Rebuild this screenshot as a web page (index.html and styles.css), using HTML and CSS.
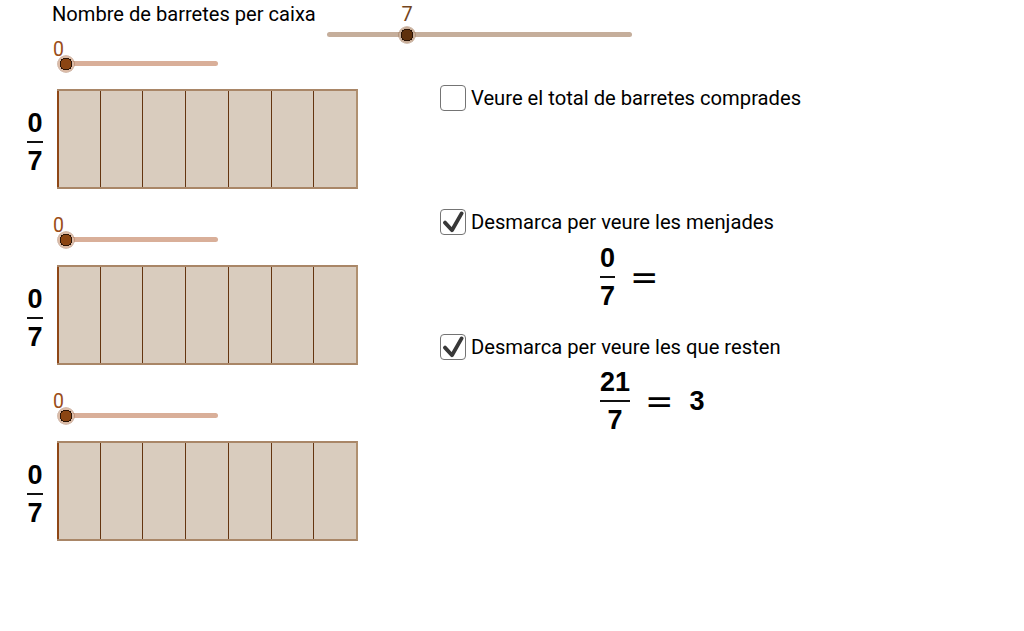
FILE: index.html
```html
<!DOCTYPE html>
<html lang="ca">
<head>
<meta charset="utf-8">
<title>Barretes</title>
<link rel="stylesheet" href="styles.css">
</head>
<body>
<div class="page">
  <header class="top">
    <div class="title">Nombre de barretes per caixa</div>
    <div class="slider big">
      <span class="track"></span>
      <span class="knob"></span>
      <span class="val">7</span>
    </div>
  </header>
  <main class="main">
    <section class="left">
      <div class="group">
        <div class="slider small">
          <span class="track"></span>
          <span class="knob"></span>
          <span class="val">0</span>
        </div>
        <div class="bar-row">
          <div class="frac side"><span class="num">0</span><span class="line"></span><span class="den">7</span></div>
          <div class="box"><span class="cell"></span><span class="cell"></span><span class="cell"></span><span class="cell"></span><span class="cell"></span><span class="cell"></span><span class="cell"></span></div>
        </div>
      </div>
      <div class="group">
        <div class="slider small">
          <span class="track"></span>
          <span class="knob"></span>
          <span class="val">0</span>
        </div>
        <div class="bar-row">
          <div class="frac side"><span class="num">0</span><span class="line"></span><span class="den">7</span></div>
          <div class="box"><span class="cell"></span><span class="cell"></span><span class="cell"></span><span class="cell"></span><span class="cell"></span><span class="cell"></span><span class="cell"></span></div>
        </div>
      </div>
      <div class="group">
        <div class="slider small">
          <span class="track"></span>
          <span class="knob"></span>
          <span class="val">0</span>
        </div>
        <div class="bar-row">
          <div class="frac side"><span class="num">0</span><span class="line"></span><span class="den">7</span></div>
          <div class="box"><span class="cell"></span><span class="cell"></span><span class="cell"></span><span class="cell"></span><span class="cell"></span><span class="cell"></span><span class="cell"></span></div>
        </div>
      </div>
    </section>
    <section class="right">
      <div class="check-row row1">
        <span class="cb"></span>
        <span class="lbl">Veure el total de barretes comprades</span>
      </div>
      <div class="check-row row2">
        <span class="cb"><svg viewBox="0 0 23 23" width="23" height="23"><path d="M4 12.6 L11 20.2 L20.6 3.4" fill="none" stroke="#383838" stroke-width="3.8" stroke-linecap="round" stroke-linejoin="round"/></svg></span>
        <span class="lbl">Desmarca per veure les menjades</span>
      </div>
      <div class="math-row m1">
        <div class="frac"><span class="num">0</span><span class="line"></span><span class="den">7</span></div>
        <span class="eq">=</span>
      </div>
      <div class="check-row row3">
        <span class="cb"><svg viewBox="0 0 23 23" width="23" height="23"><path d="M4 12.6 L11 20.2 L20.6 3.4" fill="none" stroke="#383838" stroke-width="3.8" stroke-linecap="round" stroke-linejoin="round"/></svg></span>
        <span class="lbl">Desmarca per veure les que resten</span>
      </div>
      <div class="math-row m2">
        <div class="frac"><span class="num">21</span><span class="line"></span><span class="den">7</span></div>
        <span class="eq">=</span>
        <span class="res">3</span>
      </div>
    </section>
  </main>
</div>
</body>
</html>
```
FILE: styles.css
```css
html, body {
  margin: 0;
  padding: 0;
  background: #ffffff;
}

body {
  font-family: Roboto, "Liberation Sans", sans-serif;
  font-size: 20px;
  color: #000;
}

.page {
  width: 1024px;
  height: 631px;
  overflow: hidden;
}

/* header */
.top {
  display: flex;
  height: 43px;
}

.title {
  width: 275px;
  margin-left: 52px;
  padding-top: 2px;
  line-height: 24px;
  font-size: 20.1px;
}

/* sliders */
.slider {
  position: relative;
  box-sizing: border-box;
}

.slider .track {
  display: block;
  height: 5px;
  border-radius: 3px;
}

.slider .knob {
  position: absolute;
  width: 18px;
  height: 18px;
  border-radius: 50%;
}

.slider .val {
  position: absolute;
}

.big {
  width: 305px;
  padding-top: 32px;
}

.big .track {
  width: 305px;
  background: #c5ae9b;
}

.big .knob {
  left: 71px;
  top: 25.5px;
  background: radial-gradient(circle, #5f300c 0 5.2px, #2a1406 5.2px 6.4px, #c8ad98 6.4px 7.8px, rgba(160, 120, 90, 0.5) 7.8px 9px, transparent 9px);
}

.big .val {
  left: 80px;
  top: 4px;
  transform: translateX(-50%);
  font-size: 20px;
  line-height: 20px;
  color: #74461c;
}

.small {
  height: 46px;
  padding-top: 18px;
}

.small .track {
  margin-left: 62px;
  width: 156px;
  background: #d9af99;
}

.small .knob {
  left: 56.5px;
  top: 12px;
  background: radial-gradient(circle, #8b4513 0 5.2px, #2c1507 5.2px 6.4px, #dcbba6 6.4px 7.8px, rgba(170, 120, 90, 0.5) 7.8px 9px, transparent 9px);
}

.small .val {
  left: 53px;
  top: -3.5px;
  font-size: 19.5px;
  line-height: 19px;
  color: #9a4d18;
}

/* main layout */
.main {
  display: flex;
}

.left {
  width: 440px;
  flex: none;
}

.group {
  margin-bottom: 30px;
}

.bar-row {
  display: flex;
  align-items: center;
}

/* fractions */
.frac {
  display: inline-flex;
  flex-direction: column;
  align-items: center;
  padding: 0 1px;
  font-family: "Liberation Sans", Arial, sans-serif;
  font-weight: bold;
  font-size: 27px;
  line-height: 24px;
}

.frac .num,
.frac .den {
  display: block;
}

.frac .line {
  align-self: stretch;
  height: 2px;
  margin: 6px 0;
  background: #111;
}

.frac.side {
  margin-left: 26px;
  margin-right: 13px;
  margin-top: 6px;
  width: 16px;
}

/* bar boxes */
.box {
  box-sizing: border-box;
  width: 301px;
  height: 100px;
  display: grid;
  grid-template-columns: repeat(7, 1fr);
  background: #d9ccbe;
  border-top: 2px solid #a98667;
  border-bottom: 2px solid #a98667;
  border-right: 2px solid #b09070;
}

.box .cell {
  border-left: 1.5px solid #643410;
}

.box .cell:first-child {
  border-left: 2px solid #8f4716;
}

/* right column */
.right {
  display: flex;
  flex-direction: column;
  padding-top: 42px;
}

.check-row {
  display: flex;
  align-items: center;
  gap: 5px;
  height: 26px;
  line-height: 24px;
  font-size: 20.2px;
}

.cb {
  box-sizing: border-box;
  width: 26px;
  height: 26px;
  flex: none;
  border: 1.5px solid #747474;
  border-radius: 4px;
  background: #fff;
}

.cb svg {
  display: block;
}

.row2 {
  margin-top: 98px;
}

.math-row {
  display: flex;
  align-items: center;
  padding-left: 159px;
}

.m1 {
  margin-top: 11px;
}

.row3 {
  margin-top: 26px;
}

.m2 {
  margin-top: 10px;
}

.eq {
  margin-left: 14px;
  font-family: "DejaVu Sans", sans-serif;
  font-size: 34px;
  line-height: 34px;
}

.res {
  margin-left: 16px;
  font-family: "Liberation Sans", Arial, sans-serif;
  font-weight: bold;
  font-size: 27px;
  line-height: 24px;
}
```
